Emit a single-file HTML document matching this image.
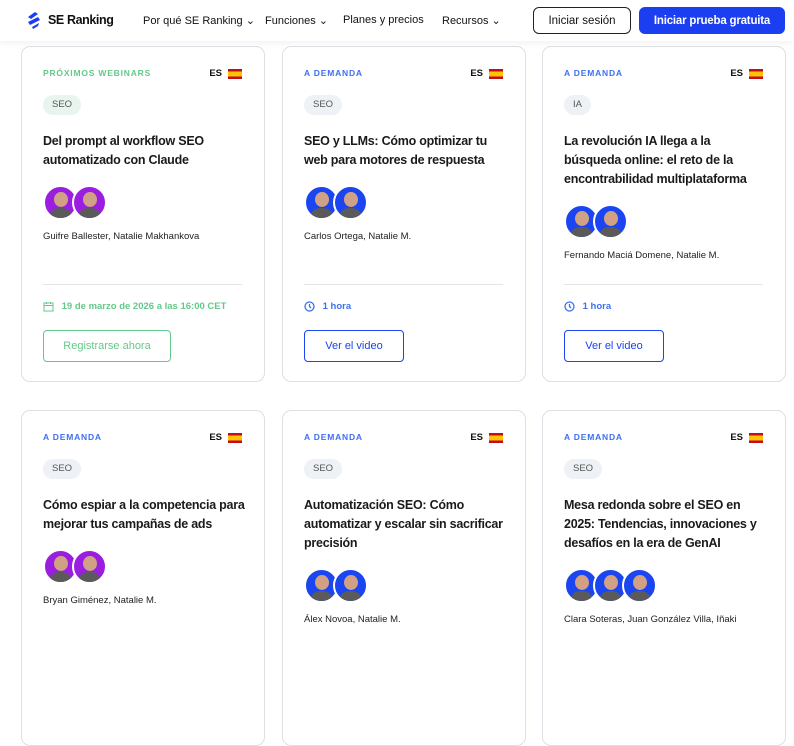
<!DOCTYPE html>
<html><head><meta charset="utf-8"><style>
*{box-sizing:border-box;margin:0;padding:0}
body{width:794px;height:628px;overflow:hidden;background:#fff;font-family:"Liberation Sans",sans-serif;color:#111;position:relative}
.hdr{position:absolute;left:0;top:0;width:794px;height:41px;background:#fff;box-shadow:0 2px 6px rgba(0,0,0,.06);z-index:5}
.logo{position:absolute;left:25px;top:11px;display:flex;align-items:center;gap:5px;font-weight:700;font-size:12.5px;letter-spacing:-.4px}
.nav{position:absolute;top:14px;font-size:11px;color:#111;white-space:nowrap}
.b1{position:absolute;left:533px;top:7px;width:98px;height:27px;border:1px solid #222;border-radius:6px;font-size:11.5px;text-align:center;line-height:26px}
.b2{position:absolute;left:639px;top:7px;width:146px;height:27px;background:#1a3ef0;color:#fff;border-radius:6px;font-size:11.5px;font-weight:700;text-align:center;line-height:28px;letter-spacing:-.2px}
.card{position:absolute;width:244px;height:336px;border:1px solid #dcdfe4;border-radius:9px;background:#fff}
.lab{position:absolute;left:21px;top:21px;font-size:8.5px;font-weight:700;letter-spacing:.8px;color:#3d6ff0}
.lab.g{color:#63c98a}
.es{position:absolute;right:22px;top:21px;font-size:9.5px;font-weight:700;display:flex;align-items:center;gap:6px}
.flag{width:14px;height:10px;background:linear-gradient(#c60b1e 0 25%,#ffc400 25% 75%,#c60b1e 75%)}
.top{position:absolute;left:21px;top:47px;right:10px}
.tag{display:inline-block;height:20px;line-height:20px;padding:0 9px;border-radius:10px;background:#eef1f5;color:#555;font-size:9.5px}
.tag.g{background:#e8f5ee}
.tt{margin-top:17px;font-size:12.5px;font-weight:700;line-height:19px;color:#1a1a1a;white-space:nowrap;letter-spacing:-.25px}
.av{margin-top:15px;display:flex;height:34px}
.av i{display:block;width:35px;height:35px;border-radius:50%;border:2px solid #fff;margin-right:-6px;position:relative;overflow:hidden}
.av i::after{content:"";position:absolute;left:9px;top:5px;width:14px;height:15px;border-radius:50%;background:#d1a185}
.av i::before{content:"";position:absolute;left:4px;bottom:0;width:23px;height:10px;border-radius:12px 12px 0 0;background:#5a5a5a}
.p{background:#9b1ee0}.bl{background:#1a45f0}
.nm{margin-top:12px;font-size:9.5px;color:#222;white-space:nowrap}
.div{position:absolute;left:21px;right:22px;top:237px;border-top:1px solid #e3e5e8}
.dt{position:absolute;left:21px;top:254px;font-size:9.5px;font-weight:700;color:#3d6ff0;display:flex;align-items:center;gap:5px}
.dt.g{color:#63c98a}
.btn{position:absolute;left:21px;top:283px;width:100px;height:32px;border:1px solid #1a45f0;border-radius:4px;color:#1a45f0;font-size:11px;text-align:center;line-height:30px}
.btn.g{width:128px;border-color:#63c98a;color:#63c98a}
</style></head><body>
<div class="hdr">
<div class="logo"><svg width="18" height="18" viewBox="0 0 18 18"><path d="M3 6 L10 1 L13 3 L6 8Z M3 11 L13 6 L15 9 L5 14Z M7 16 L14 12 L13 15 L8 18Z" fill="#1a3ef0"/></svg>SE Ranking</div>
<div class="nav" style="left:143px">Por qué SE Ranking ⌄</div>
<div class="nav" style="left:265px">Funciones ⌄</div>
<div class="nav" style="left:343px">Planes y precios</div>
<div class="nav" style="left:442px">Recursos ⌄</div>
<div class="b1">Iniciar sesión</div>
<div class="b2">Iniciar prueba gratuita</div>
</div>

<div class="card" style="left:21px;top:46px">
<div class="lab g">PRÓXIMOS WEBINARS</div><div class="es">ES<span class="flag"></span></div>
<div class="top"><span class="tag g">SEO</span><div class="tt">Del prompt al workflow SEO<br>automatizado con Claude</div>
<div class="av"><i class="p"></i><i class="p"></i></div><div class="nm">Guifre Ballester, Natalie Makhankova</div></div>
<div class="div"></div>
<div class="dt g"><svg width="11" height="11" viewBox="0 0 11 11" fill="none" stroke="#63c98a"><rect x="1" y="2" width="9" height="8"/><path d="M1 4.5H10M3.5 1V3M7.5 1V3"/></svg>&nbsp;19 de marzo de 2026 a las 16:00 CET</div>
<div class="btn g">Registrarse ahora</div>
</div>

<div class="card" style="left:282px;top:46px">
<div class="lab">A DEMANDA</div><div class="es">ES<span class="flag"></span></div>
<div class="top"><span class="tag">SEO</span><div class="tt">SEO y LLMs: Cómo optimizar tu<br>web para motores de respuesta</div>
<div class="av"><i class="bl"></i><i class="bl"></i></div><div class="nm">Carlos Ortega, Natalie M.</div></div>
<div class="div"></div>
<div class="dt"><svg width="11" height="11" viewBox="0 0 11 11" fill="none" stroke="#3d6ff0" stroke-width="1.3"><circle cx="5.5" cy="5.5" r="4.5"/><path d="M5.5 3V5.5L7 7"/></svg>&nbsp;1 hora</div>
<div class="btn">Ver el video</div>
</div>

<div class="card" style="left:542px;top:46px">
<div class="lab">A DEMANDA</div><div class="es">ES<span class="flag"></span></div>
<div class="top"><span class="tag">IA</span><div class="tt">La revolución IA llega a la<br>búsqueda online: el reto de la<br>encontrabilidad multiplataforma</div>
<div class="av"><i class="bl"></i><i class="bl"></i></div><div class="nm">Fernando Maciá Domene, Natalie M.</div></div>
<div class="div"></div>
<div class="dt"><svg width="11" height="11" viewBox="0 0 11 11" fill="none" stroke="#3d6ff0" stroke-width="1.3"><circle cx="5.5" cy="5.5" r="4.5"/><path d="M5.5 3V5.5L7 7"/></svg>&nbsp;1 hora</div>
<div class="btn">Ver el video</div>
</div>

<div class="card" style="left:21px;top:410px">
<div class="lab">A DEMANDA</div><div class="es">ES<span class="flag"></span></div>
<div class="top"><span class="tag">SEO</span><div class="tt">Cómo espiar a la competencia para<br>mejorar tus campañas de ads</div>
<div class="av"><i class="p"></i><i class="p"></i></div><div class="nm">Bryan Giménez, Natalie M.</div></div>
</div>

<div class="card" style="left:282px;top:410px">
<div class="lab">A DEMANDA</div><div class="es">ES<span class="flag"></span></div>
<div class="top"><span class="tag">SEO</span><div class="tt">Automatización SEO: Cómo<br>automatizar y escalar sin sacrificar<br>precisión</div>
<div class="av"><i class="bl"></i><i class="bl"></i></div><div class="nm">Álex Novoa, Natalie M.</div></div>
</div>

<div class="card" style="left:542px;top:410px">
<div class="lab">A DEMANDA</div><div class="es">ES<span class="flag"></span></div>
<div class="top"><span class="tag">SEO</span><div class="tt">Mesa redonda sobre el SEO en<br>2025: Tendencias, innovaciones y<br>desafíos en la era de GenAI</div>
<div class="av"><i class="bl"></i><i class="bl"></i><i class="bl"></i></div><div class="nm">Clara Soteras, Juan González Villa, Iñaki</div></div>
</div>
</body></html>
